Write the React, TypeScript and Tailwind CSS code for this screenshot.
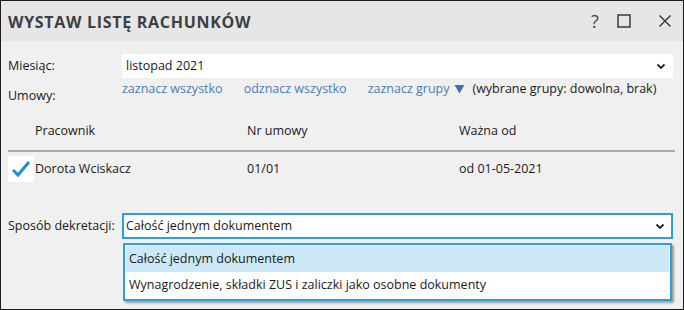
import React from "react";

const font = { fontFamily: '"Open Sans", "Noto Sans", sans-serif' };

function Chevron() {
  return (
    <svg width="10" height="7" viewBox="0 0 10 7">
      <path d="M1.5 1.5 L5 5 L8.5 1.5" fill="none" stroke="#222" strokeWidth="1.8" />
    </svg>
  );
}

export default function App() {
  return (
    <div
      className="relative w-[684px] h-[310px] border border-[#1c1c1c] bg-[#f0f0f0] text-[12.5px] text-[#1a1a1a] flex flex-col overflow-hidden whitespace-nowrap"
      style={font}
    >
      {/* Title bar */}
      <div className="h-[40px] bg-[#e6e6e6] flex items-center pl-[7px] pr-[11px] shrink-0">
        <div className="text-[16px] font-bold text-[#3c3f44] tracking-[0.7px] flex-1 pt-px">
          WYSTAW LISTĘ RACHUNKÓW
        </div>
        <div className="flex items-center text-[#444]">
          <span className="text-[18px] leading-none w-[12px] text-center">?</span>
          <svg className="ml-[16px]" width="14" height="14" viewBox="0 0 14 14">
            <rect x="1" y="1" width="12" height="12" fill="none" stroke="#444" strokeWidth="1.6" />
          </svg>
          <svg className="ml-[27px]" width="14" height="14" viewBox="0 0 14 14">
            <path d="M1.5 1.5 L12.5 12.5 M12.5 1.5 L1.5 12.5" stroke="#444" strokeWidth="1.6" />
          </svg>
        </div>
      </div>

      {/* Body */}
      <div className="flex flex-col pl-[7px] pr-[10px] pt-[13px]">
        {/* Miesiąc */}
        <div className="flex items-center h-[24px]">
          <div className="w-[114px]">Miesiąc:</div>
          <div className="flex-1 h-[24px] bg-white flex items-center pl-[4px] pr-[7px]">
            <span className="flex-1">listopad 2021</span>
            <Chevron />
          </div>
        </div>

        {/* Umowy */}
        <div className="flex h-[26px] items-start">
          <div className="w-[114px] pt-[9px]">Umowy:</div>
          <div className="flex items-center text-[#4a7db5] pt-[2px]">
            <span>zaznacz wszystko</span>
            <span className="ml-[21px]">odznacz wszystko</span>
            <span className="ml-[21px]">zaznacz grupy</span>
            <svg className="ml-[5px]" width="11" height="10" viewBox="0 0 11 10">
              <path d="M0.5 1 L10.5 1 L5.5 9.5 Z" fill="#3f73b0" />
            </svg>
            <span className="ml-[7px] text-[#1a1a1a]">(wybrane grupy: dowolna, brak)</span>
          </div>
        </div>

        {/* Table header */}
        <div className="flex items-center h-[26px] mt-[14px] pl-[27px]">
          <div className="w-[212px]">Pracownik</div>
          <div className="w-[212px]">Nr umowy</div>
          <div>Ważna od</div>
        </div>
        <div className="h-[2px] bg-[#a9a9a9] mt-[6px] mr-[-2px]" />
        {/* Row */}
        <div className="flex items-center h-[26px] mt-[4px]">
          <div className="w-[26px] h-[26px] bg-white flex items-center justify-center mr-px">
            <svg width="20" height="18" viewBox="0 0 20 18">
              <path d="M2 10 L7 15 L18 2" fill="none" stroke="#1a8fd8" strokeWidth="3" />
            </svg>
          </div>
          <div className="w-[212px]">Dorota Wciskacz</div>
          <div className="w-[212px]">01/01</div>
          <div>od 01-05-2021</div>
        </div>

        {/* Sposób dekretacji */}
        <div className="flex items-center h-[26px] mt-[31px]">
          <div className="w-[114px]">Sposób dekretacji:</div>
          <div className="flex-1 h-[26px] bg-white border-2 border-[#2ba0dc] flex items-center pl-[2px] pr-[6px]">
            <span className="flex-1">Całość jednym dokumentem</span>
            <Chevron />
          </div>
        </div>
      </div>

      {/* Dropdown list */}
      <div className="absolute left-[122px] top-[242px] w-[549px] h-[58px] bg-white border-2 border-[#2ba0dc] shadow-[2px_2px_2px_rgba(0,0,0,0.35)] flex flex-col pt-px pl-px pr-px">
        <div className="h-[26px] bg-[#cce8f6] flex items-center pl-[3px]">Całość jednym dokumentem</div>
        <div className="h-[27px] flex items-center pl-[3px]">
          Wynagrodzenie, składki ZUS i zaliczki jako osobne dokumenty
        </div>
      </div>
    </div>
  );
}
